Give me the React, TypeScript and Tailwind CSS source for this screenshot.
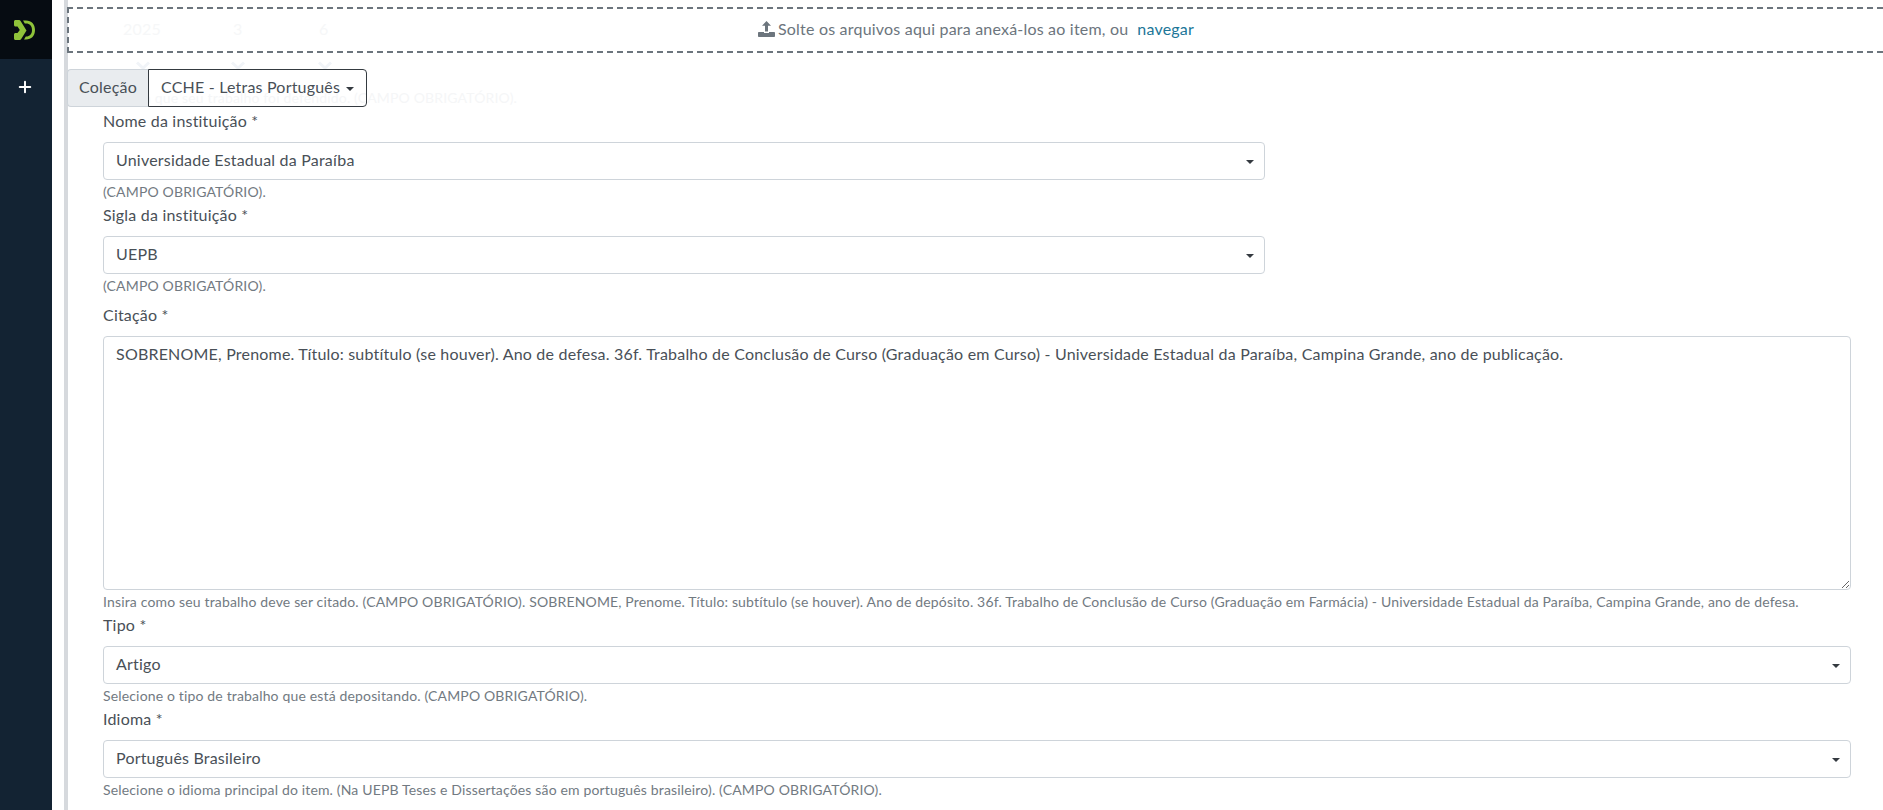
import { Plus } from "lucide-react";

function Caret() {
  return <span className="mt-[3px] h-0 w-0 border-x-[4px] border-t-[4px] border-x-transparent border-t-[#343a40]" />;
}

function Chevron({ className }: { className: string }) {
  return (
    <svg width="16" height="9" viewBox="0 0 16 9" fill="none" className={className}>
      <path d="M2 1.500L8 7L14 1.500" stroke="#f1f4f8" strokeWidth="3" />
    </svg>
  );
}

function SelectField({ label, value, help, narrow }: { label: string; value: string; help: string; narrow?: boolean }) {
  return (
    <div>
      <label className="mb-[8px] block h-[24px] leading-[22px]">{label}</label>
      <div className={`flex h-[38px] items-center justify-between rounded-[4px] border border-[#ced4da] bg-white pb-[2px] pl-[12px] pr-[10px] text-[#495057] ${narrow ? "w-[1162px]" : "w-full"}`}>
        <span>{value}</span>
        <Caret />
      </div>
      <small className="block h-[24px] text-[14px] leading-[24px] tracking-[0.157px] text-[#727a82]">{help}</small>
    </div>
  );
}

export default function App() {
  return (
    <div className="flex h-[810px] w-[1883px] overflow-hidden bg-white font-['Lato',sans-serif] text-[16px] tracking-[0.2px] text-[#495057]">
      {/* sidebar */}
      <aside className="w-[52px] shrink-0 bg-[#132333]">
        <div className="flex h-[59px] items-center justify-center bg-[#060c12] pr-[3px]">
          <svg width="21" height="20" viewBox="0 0 21 20" fill="#8fc33a">
            <path d="M0 1.500C0 0.700 0.700 0 1.500 0H5C5.700 0 6.200 0.300 6.600 1L12.500 10.500L7.500 18.500C7 19.500 6 20 5 20H1.500C0.700 20 0 19.300 0 18.500V14.500C0 13.700 0.700 13 1.500 13H3.500L5.800 10L3.500 6.500H1.500C0.700 6.500 0 5.800 0 5Z" />
            <path d="M9 0.500H12C17.500 0.500 21 4.300 21 10C21 15.700 17.500 19.500 12 19.500H10L11.800 16.500H12C15.800 16.500 18 14 18 10C18 6 15.800 3.500 12 3.500H10.800Z" />
          </svg>
        </div>
        <div className="flex h-[56px] items-center justify-center pr-[3px]">
          <Plus size={18} strokeWidth={2.6} className="text-white" />
        </div>
      </aside>
      <div className="w-[12px] shrink-0 bg-white" />
      <div className="w-[4px] shrink-0 bg-[#d6d9dd]" />
      {/* main */}
      <main className="relative min-w-0 flex-1 pr-[32px]">
        {/* form fields faintly showing through the drop overlay */}
        <div className="pointer-events-none absolute left-[55px] top-[17px] text-[#f6f7f8]">2025</div>
        <div className="pointer-events-none absolute left-[165px] top-[17px] text-[#f6f7f8]">3</div>
        <div className="pointer-events-none absolute left-[251px] top-[17px] text-[#f6f7f8]">6</div>
        <Chevron className="absolute left-[67px] top-[61px]" />
        <Chevron className="absolute left-[162px] top-[61px]" />
        <Chevron className="absolute left-[249px] top-[61px]" />
        <div className="pointer-events-none absolute left-0 top-[87px] flex w-[449px] justify-end whitespace-nowrap text-[14px] leading-[21px] tracking-[0.157px] text-[#f5f6f7]">
          em que seu trabalho foi defendido. (CAMPO OBRIGATÓRIO).
        </div>

        <div className="relative ml-[-1px] mr-[-32px] mt-[7px] flex h-[46px] items-center justify-center border-y-2 border-l-2 border-dashed border-[#6c757d] pb-[2px] text-[#6c757d]">
          <svg width="17" height="16" viewBox="0 0 17 16" className="mr-[3px]" fill="#6c757d">
            <path d="M8.500 0L13 4.800H10V10.500H7V4.800H4Z" />
            <path d="M0 12C0 11.400 0.500 11 1 11H6V12H11V11H16C16.500 11 17 11.400 17 12V15C17 15.600 16.500 16 16 16H1C0.500 16 0 15.600 0 15Z" />
          </svg>
          <span>Solte os arquivos aqui para anexá-los ao item, ou</span>
          <span className="ml-[9px] text-[#207698]">navegar</span>
        </div>
        <div className="relative ml-[-1px] mt-[16px] flex h-[38px] w-fit">
          <div className="flex w-[81px] items-center justify-center rounded-l-[4px] border border-r-0 border-[#ced4da] bg-[#e9ecef] pb-[2px]">Coleção</div>
          <div className="flex items-center gap-[6px] rounded-r-[4px] border border-[#343a40] pb-[2px] pl-[12px] pr-[12px]">
            CCHE - Letras Português <Caret />
          </div>
        </div>
        <div className="relative mt-[3px] pl-[35px]">
          <SelectField label="Nome da instituição *" value="Universidade Estadual da Paraíba" help="(CAMPO OBRIGATÓRIO)." narrow />
          <SelectField label="Sigla da instituição *" value="UEPB" help="(CAMPO OBRIGATÓRIO)." narrow />
          <div className="pt-[6px]">
            <label className="mb-[8px] block h-[24px] leading-[22px]">Citação *</label>
            <textarea
              readOnly
              className="block h-[254px] w-full rounded-[4px] border border-[#ced4da] px-[12px] py-[5px] outline-none"
              value="SOBRENOME, Prenome. Título: subtítulo (se houver). Ano de defesa. 36f. Trabalho de Conclusão de Curso (Graduação em Curso) - Universidade Estadual da Paraíba, Campina Grande, ano de publicação."
            />
            <small className="block h-[24px] text-[14px] leading-[24px] tracking-[0.157px] text-[#727a82]">
              Insira como seu trabalho deve ser citado. (CAMPO OBRIGATÓRIO). SOBRENOME, Prenome. Título: subtítulo (se houver). Ano de depósito. 36f. Trabalho de Conclusão de Curso (Graduação em Farmácia) - Universidade Estadual da Paraíba, Campina Grande, ano de defesa.
            </small>
          </div>
          <SelectField label="Tipo *" value="Artigo" help="Selecione o tipo de trabalho que está depositando. (CAMPO OBRIGATÓRIO)." />
          <SelectField label="Idioma *" value="Português Brasileiro" help="Selecione o idioma principal do item. (Na UEPB Teses e Dissertações são em português brasileiro). (CAMPO OBRIGATÓRIO)." />
        </div>
      </main>
    </div>
  );
}
